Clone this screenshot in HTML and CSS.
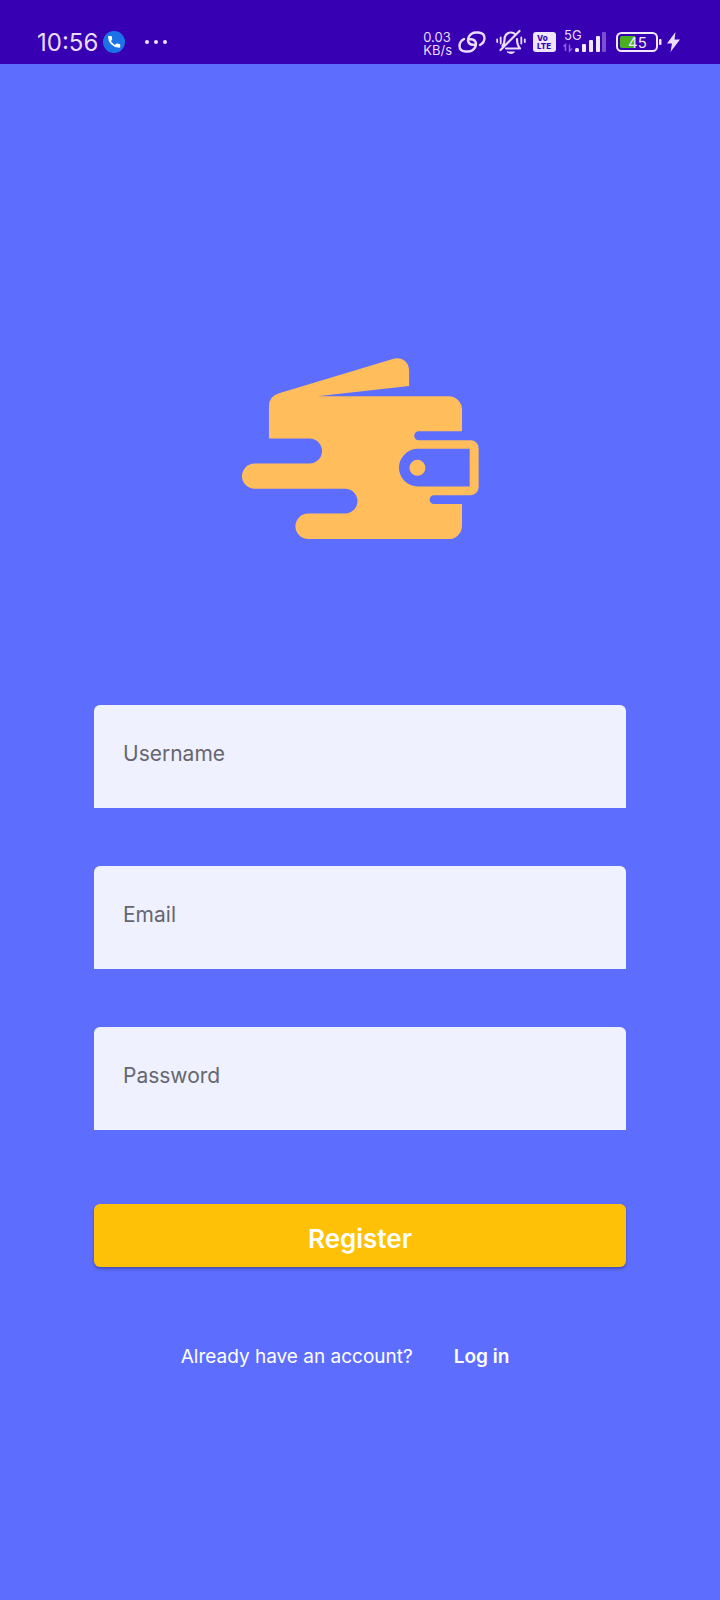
FILE: index.html
```html
<!DOCTYPE html>
<html lang="en">
<head>
<meta charset="utf-8">
<meta name="viewport" content="width=device-width, initial-scale=1">
<title>Register</title>
<link rel="stylesheet" href="styles.css">
</head>
<body>
<header class="status">
  <div class="status-left">
    <time class="clock">10:56</time>
    <svg class="phone" width="22" height="22" viewBox="0 0 22 22" aria-hidden="true">
      <circle cx="11" cy="11" r="11" fill="#1c73e8"/>
      <path fill="#fff" d="M5 5.600Q5 5 5.700 5h2.400q.6 0 .7.600l.4 2.500q.1.500-.2.800L7.900 10.100q1.400 2.500 3.900 3.800l1.300-1.200q.3-.3.800-.2l2.700.4q.6.100.6.700v2.300q0 .8-.8.800Q5.400 16 5 5.600Z"/>
    </svg>
    <svg class="dots" width="24" height="6" viewBox="0 0 24 6" aria-hidden="true" fill="#eee4fb">
      <circle cx="3" cy="3" r="2"/><circle cx="12" cy="3" r="2"/><circle cx="21" cy="3" r="2"/>
    </svg>
  </div>
  <div class="status-right">
    <div class="speed"><span>0.03</span><span>KB/s</span></div>
    <svg class="link" width="28" height="22" viewBox="0 0 28 22" aria-hidden="true" fill="none" stroke="#eadcfa" stroke-width="2.400" stroke-linecap="round">
      <path d="M17.500 13.800H15Q10.500 13.500 10 9.500Q10 5 14 2.500Q15.500 1.500 18 1.500H20.500Q26.500 2 26.500 7Q26.500 11.500 22 14"/>
      <path d="M10.500 8.200H13Q17.500 8.500 18 12.500Q18 17 14 19.500Q12.500 20.500 10 20.500H7.500Q1.500 20 1.500 15Q1.500 10.500 6 8"/>
    </svg>
    <svg class="bell" width="30" height="26" viewBox="0 0 30 26" aria-hidden="true" fill="none" stroke="#eadcfa" stroke-width="2.200" stroke-linecap="round" stroke-linejoin="round">
      <path d="M6.500 17Q8.500 14.500 8.500 11Q8.500 4 14.500 3.500Q17.500 3.300 19.500 5.500M21 10Q21 16 24 19.500H10M23.500 2 4.500 21"/>
      <path d="M11.500 23H18.500Q15 26 11.500 23Z" fill="#eadcfa" stroke-width="1"/>
      <path d="M1.200 10.500v2.500M4.700 8.500v6M25.300 8.500v6M28.800 10.500v2.500" stroke-width="1.800"/>
    </svg>
    <svg class="volte" width="24" height="20" viewBox="0 0 24 20" role="img" aria-label="VoLTE">
      <rect width="23" height="20" rx="3" fill="#eee4fb"/>
      <text x="4" y="9" font-size="8">Vo</text>
      <text x="4" y="17" font-size="8">LTE</text>
    </svg>
    <svg class="signal" width="44" height="24" viewBox="0 0 44 24" role="img" aria-label="5G signal">
      <text x="1" y="10" font-size="13" fill="#eadcfa">5G</text>
      <path d="M2.500 21V14.500L.5 16.500M6.500 14.500V21L9 18.500" stroke="#8d66d6" stroke-width="1.500" fill="none"/>
      <g fill="#f1e8fc"><rect x="12" y="18" width="4" height="4" rx="1.500"/><rect x="19" y="14" width="4" height="8" rx="1"/><rect x="26" y="10" width="4" height="12" rx="1"/><rect x="33" y="6" width="4" height="16" rx="1"/></g>
      <rect x="39" y="2" width="4" height="20" rx="1" fill="#7d4fd0"/>
    </svg>
    <svg class="battery" width="46" height="20" viewBox="0 0 46 20" role="img" aria-label="Battery 45 percent">
      <rect x="1" y="1" width="40" height="18" rx="4.500" fill="none" stroke="#f1e8fc" stroke-width="2"/>
      <path d="M6 4H19V16H6Q4 16 4 14V6Q4 4 6 4Z" fill="#4caf20"/>
      <rect x="43" y="7" width="2.500" height="6" rx="1" fill="#f1e8fc"/>
      <text x="12" y="15.500" font-size="15" fill="#f1e8fc">45</text>
    </svg>
    <svg class="bolt" width="13" height="20" viewBox="0 0 13 20" aria-hidden="true">
      <path d="M8.500 0 0 11.500H5L3.500 20 13 7.500H7.500Z" fill="#eadcfa"/>
    </svg>
  </div>
</header>
<main class="page">
  <svg class="logo" viewBox="35 54 712 546" role="img" aria-label="Wallet" fill="#ffbd5b">
    <path fill-rule="evenodd" d="M116 296V199Q116 170 144 161L488 57C515 49 537 65 537 92V138L262 169H656A40 40 0 0 1 696 209V274H566A13.500 13.500 0 0 0 566 301H722A24 24 0 0 1 746 325V442A24 24 0 0 1 722 466H612A13.500 13.500 0 0 0 612 493H696V558A40 40 0 0 1 656 598H234A38.500 38.500 0 0 1 234 521H345A37 37 0 0 0 345 447H73A38 38 0 0 1 73 371H238A37.500 37.500 0 0 0 238 296ZM563 327H719V440H563A56.500 56.500 0 0 1 563 327Z"/>
    <circle cx="562" cy="384" r="24"/>
  </svg>
  <form class="form">
    <input class="field" type="text" placeholder="Username" aria-label="Username">
    <input class="field" type="email" placeholder="Email" aria-label="Email">
    <input class="field" type="password" placeholder="Password" aria-label="Password">
    <button class="submit" type="button">Register</button>
  </form>
  <p class="login"><span>Already have an account?</span><a class="login-link" href="#">Log in</a></p>
</main>
</body>
</html>
```
FILE: styles.css
```css
* { box-sizing: border-box; }

body {
  margin: 0;
  min-height: 100vh;
  background: #5d6eff;
  color: #fff;
  font-family: Inter, Roboto, sans-serif;
}

svg { overflow: visible; }

.status {
  display: flex;
  justify-content: space-between;
  align-items: center;
  height: 64px;
  padding: 20px 40px 0 37px;
  background: #3700b3;
  color: #eadcfa;
}

.status-left,
.status-right {
  display: flex;
  align-items: center;
}

.clock {
  padding-top: 2px;
  font-size: 24px;
  line-height: 28px;
}

.phone { margin-left: 5px; }
.dots { margin-left: 19px; }

.speed {
  display: flex;
  flex-direction: column;
  font-size: 13px;
  line-height: 13px;
  padding-top: 4px;
}

.link { margin-left: 6px; }
.bell { margin-left: 10px; }
.volte { margin-left: 7px; font-weight: 800; fill: #3700b3; }
.signal { margin-left: 6px; }
.battery { margin-left: 9px; }
.bolt { margin-left: 5px; }

.page {
  display: flex;
  flex-direction: column;
  padding: 294px 94px 64px;
}

.logo {
  width: 237px;
  align-self: center;
}

.form {
  display: flex;
  flex-direction: column;
  gap: 58px;
  margin-top: 165px;
}

.field {
  width: 100%;
  height: 103px;
  padding: 0 29px 6px;
  border: 0;
  border-radius: 6px 6px 0 0;
  background: #eff1ff;
  color: #333;
  font: 400 21px/28px Inter, Roboto, sans-serif;
}

.field::placeholder { color: #66666f; opacity: 1; }

.submit {
  height: 63px;
  margin-top: 16px;
  padding: 8px 0 0;
  border: 0;
  border-radius: 6px;
  background: #ffc107;
  box-shadow: 0 2px 3px rgba(0, 0, 0, 0.3);
  color: #fff;
  font: 600 26px/32px Inter, Roboto, sans-serif;
}

.login {
  display: flex;
  justify-content: center;
  gap: 41px;
  margin: 78px 30px 0 0;
  font-size: 19px;
  line-height: 24px;
}

.login-link {
  color: #fff;
  font-weight: 600;
  text-decoration: none;
}
```
